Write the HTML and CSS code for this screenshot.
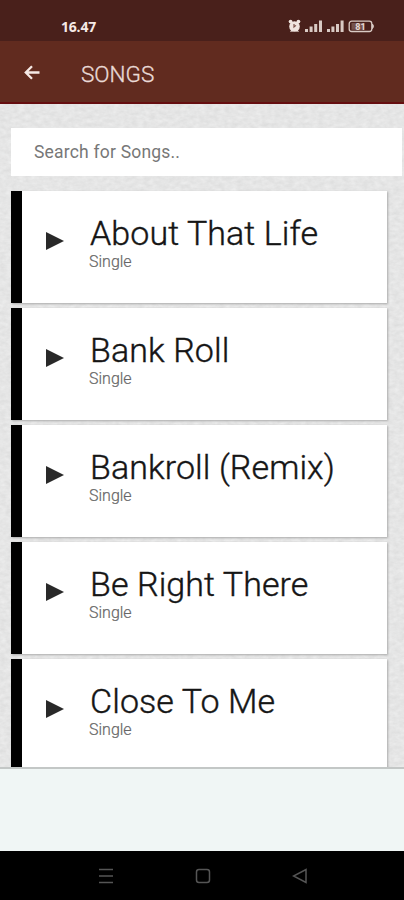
FILE: index.html
```html
<!DOCTYPE html>
<html lang="en">
<head>
<meta charset="utf-8">
<title>Songs</title>
<link rel="stylesheet" href="styles.css">
</head>
<body>
<div class="screen">
  <header class="status">
    <span class="clock">16.47</span>
    <svg class="status-icons" width="88" height="16" viewBox="0 0 88 16">
      <g fill="#f1e5df">
        <circle cx="6.5" cy="8.5" r="5.3"/>
        <circle cx="2.6" cy="3.6" r="1.9"/><circle cx="10.4" cy="3.6" r="1.9"/>
        <path d="M2 14l2-3 2 2zM11 14l-2-3-2 2z"/>
      </g>
      <path d="M6 6v3l2-1.6" fill="none" stroke="#7b5048" stroke-width="1.2"/>
      <g fill="#d9cac4">
        <path d="M17 11h3v3h-3zM21.600 8.500h3v5.500h-3zM26.200 6h3v8h-3zM31 2.500h3v11.500h-3z"/>
        <path d="M39 11h3v3h-3zM43.400 8.500h3v5.500h-3zM48 6h3v8h-3zM52.600 2.500h3v11.500h-3z"/>
      </g>
      <rect x="61.200" y="3.200" width="22.600" height="10.300" rx="2.500" fill="none" stroke="#d9cac4" stroke-width="1.300"/>
      <path d="M84.500 6q2 2.300 0 4.600z" fill="#d9cac4" stroke="#d9cac4"/>
      <rect x="63.500" y="5" width="13" height="6.800" fill="#75534c"/>
      <text class="battery-level" x="72.500" y="11.800" text-anchor="middle">81</text>
    </svg>
  </header>
  <div class="toolbar">
    <svg class="back" width="18" height="18" viewBox="0 0 18 18"><path d="M16.500 9.500H3M9 3.300L2.800 9.500L9 15.700" fill="none" stroke="#f5e9e5" stroke-width="2.300"/></svg>
    <h1>SONGS</h1>
  </div>
  <main>
    <svg class="paper" width="404" height="663" aria-hidden="true">
      <filter id="grain" x="0" y="0" width="100%" height="100%" color-interpolation-filters="sRGB">
        <feTurbulence type="fractalNoise" baseFrequency="0.16 0.26" numOctaves="3" seed="4"/>
        <feColorMatrix values="0.080 0 0 0 0.858  0.080 0 0 0 0.859  0.080 0 0 0 0.859  0 0 0 0 1"/>
      </filter>
      <rect width="404" height="663" filter="url(#grain)"/>
    </svg>
    <div class="search">Search for Songs..</div>
    <div class="songs">
      <article class="song"><svg class="play" width="18" height="18"><path d="M0 0L18 9L0 18z"/></svg><div><h2>About That Life</h2><p>Single</p></div></article>
      <article class="song"><svg class="play" width="18" height="18"><path d="M0 0L18 9L0 18z"/></svg><div><h2>Bank Roll</h2><p>Single</p></div></article>
      <article class="song"><svg class="play" width="18" height="18"><path d="M0 0L18 9L0 18z"/></svg><div><h2>Bankroll (Remix)</h2><p>Single</p></div></article>
      <article class="song"><svg class="play" width="18" height="18"><path d="M0 0L18 9L0 18z"/></svg><div><h2>Be Right There</h2><p>Single</p></div></article>
      <article class="song"><svg class="play" width="18" height="18"><path d="M0 0L18 9L0 18z"/></svg><div><h2>Close To Me</h2><p>Single</p></div></article>
    </div>
  </main>
  <div class="banner"></div>
  <nav>
    <svg width="16" height="16" viewBox="0 0 16 16"><path d="M1 1.500h14M1 8h14M1 14.500h14"/></svg>
    <svg width="16" height="16" viewBox="0 0 16 16"><rect x="1.500" y="1.500" width="13" height="13" rx="2.500"/></svg>
    <svg width="16" height="16" viewBox="0 0 16 16"><path d="M14 1.500v13L1.500 8z"/></svg>
  </nav>
</div>
</body>
</html>
```
FILE: styles.css
```css
* { box-sizing: border-box; margin: 0; padding: 0; }
body { font-family: Roboto, sans-serif; overflow: hidden; }
svg { display: block; flex: none; }
.screen { width: 404px; height: 900px; display: flex; flex-direction: column; }
.status {
  height: 41px; flex: none;
  display: flex; justify-content: space-between; align-items: flex-start;
  padding: 18px 28px 0 61px;
  background: #49201b;
}
.clock { font: 700 14px/17px "Open Sans", sans-serif; letter-spacing: -.2px; color: #f5e9e5; }
.battery-level { font: 700 9px Roboto, sans-serif; fill: #e6dad5; }
.toolbar {
  height: 63px; flex: none;
  display: flex; align-items: center; gap: 40px;
  padding-left: 23px;
  background: #612b1f;
  border-bottom: 2px solid #650e10;
}
.toolbar h1 { padding-top: 5px; font-size: 22.500px; line-height: 28px; font-weight: 300; color: #eadbd7; -webkit-text-stroke: .3px #eadbd7; }
main {
  position: relative; z-index: 0;
  height: 663px; flex: none; overflow: hidden;
  padding: 24px 2px 0 11px;
  background: #e5e6e6;
}
.paper { position: absolute; top: 0; left: 0; z-index: -1; }
.search {
  height: 48px; padding-left: 23px;
  background: #fff; color: #777;
  font-size: 17.500px; line-height: 48px; letter-spacing: .2px;
}
.songs { display: flex; flex-direction: column; gap: 5px; margin: 15px 15px 0 0; }
.song {
  height: 112px; flex: none;
  display: flex; align-items: flex-start; gap: 25px;
  padding: 23px 0 0 24px;
  background: #fff; border-left: 11px solid #000;
  box-shadow: 1px 1px 2px #aaa;
}
.play { margin-top: 18px; fill: #292929; }
.song h2 { padding-left: 1px; font-size: 34px; line-height: 39px; font-weight: 300; letter-spacing: .08px; color: #151515; white-space: nowrap; -webkit-text-stroke: .4px #151515; }
.song p { font-size: 16px; line-height: 18px; font-weight: 300; color: #666; -webkit-text-stroke: .2px #666; }
.banner { height: 84px; flex: none; background: #f0f6f5; border-top: 2px solid #c3c7c6; }
nav {
  height: 49px; flex: none;
  display: flex; gap: 81px; padding: 17px 0 0 98px;
  background: #000;
}
nav svg { fill: none; stroke: #555; stroke-width: 1.5; }
```
